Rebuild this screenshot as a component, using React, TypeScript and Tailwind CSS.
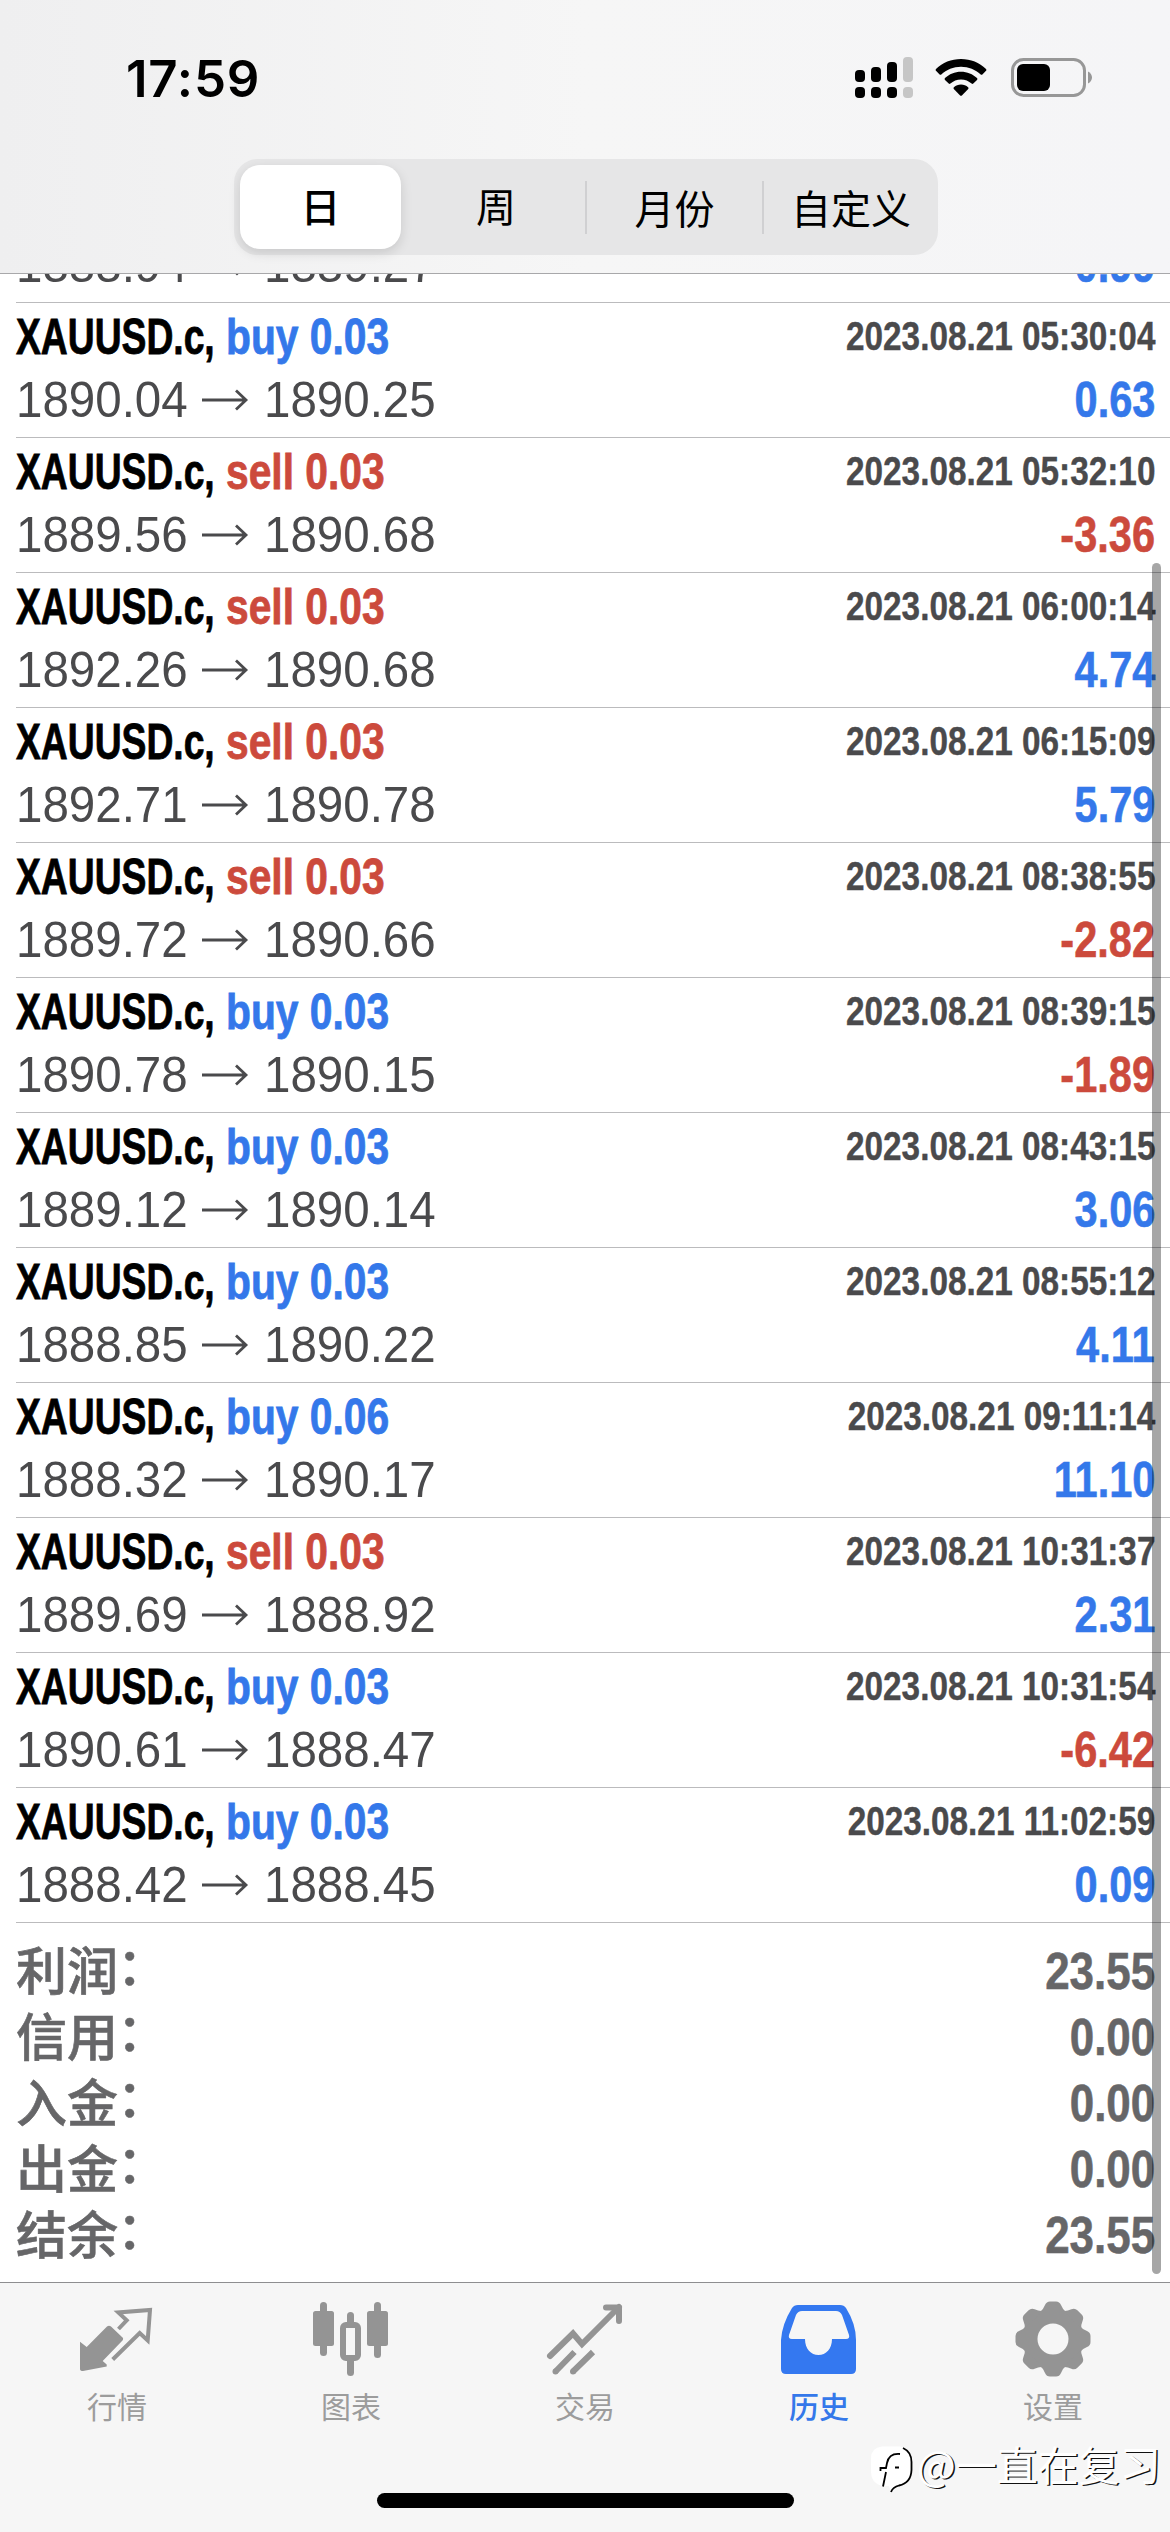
import React from "react";

const BLUE = "text-[#3478ea]";
const RED = "text-[#cc4a3c]";

type Deal = [side: "buy" | "sell", lot: string, from: string, to: string, time: string, profit: string];

const deals: Deal[] = [
  ["buy", "0.03", "1888.94", "1889.27", "05:28:10", "0.99"],
  ["buy", "0.03", "1890.04", "1890.25", "05:30:04", "0.63"],
  ["sell", "0.03", "1889.56", "1890.68", "05:32:10", "-3.36"],
  ["sell", "0.03", "1892.26", "1890.68", "06:00:14", "4.74"],
  ["sell", "0.03", "1892.71", "1890.78", "06:15:09", "5.79"],
  ["sell", "0.03", "1889.72", "1890.66", "08:38:55", "-2.82"],
  ["buy", "0.03", "1890.78", "1890.15", "08:39:15", "-1.89"],
  ["buy", "0.03", "1889.12", "1890.14", "08:43:15", "3.06"],
  ["buy", "0.03", "1888.85", "1890.22", "08:55:12", "4.11"],
  ["buy", "0.06", "1888.32", "1890.17", "09:11:14", "11.10"],
  ["sell", "0.03", "1889.69", "1888.92", "10:31:37", "2.31"],
  ["buy", "0.03", "1890.61", "1888.47", "10:31:54", "-6.42"],
  ["buy", "0.03", "1888.42", "1888.45", "11:02:59", "0.09"],
];

const totals = [
  ["利润", "23.55"],
  ["信用", "0.00"],
  ["入金", "0.00"],
  ["出金", "0.00"],
  ["结余", "23.55"],
];

function StatusBar() {
  return (
    <div className="flex h-[159px] items-start justify-between pl-[126px] pr-[78px] pt-[56px]">
      <div className="text-[51px] font-semibold leading-[45px] tracking-[0.8px] text-black font-['Inter',sans-serif]">17:59</div>
      <div className="flex items-start">
        <svg width="60" height="42" viewBox="0 0 60 42" className="mr-[21px]">
          <g fill="#000">
            <rect x="1" y="14" width="10" height="12" rx="4" />
            <rect x="17" y="11" width="10" height="15" rx="4" />
            <rect x="33" y="6" width="10" height="20" rx="4" />
            <rect x="1" y="31" width="10" height="11" rx="4" />
            <rect x="17" y="31" width="10" height="11" rx="4" />
            <rect x="33" y="31" width="10" height="11" rx="4" />
          </g>
          <g fill="#c6c6c6">
            <rect x="49" y="1" width="10" height="25" rx="4" />
            <rect x="49" y="31" width="10" height="11" rx="4" />
          </g>
        </svg>
        <svg width="52" height="42" viewBox="0 0 52 42" className="mr-[21px]">
          <path d="M26 3c9.700 0 18.500 3.700 25 9.900.5.500.5 1.300 0 1.800l-3.600 3.700c-.5.500-1.200.5-1.700 0C40.500 13.600 33.600 10.700 26 10.700S11.500 13.600 6.300 18.400c-.5.500-1.200.5-1.700 0L1 14.700c-.5-.5-.5-1.300 0-1.800C7.500 6.700 16.300 3 26 3z" />
          <path d="M26 15.800c6.200 0 11.800 2.400 16 6.300.5.500.5 1.300 0 1.800l-3.700 3.700c-.5.500-1.200.5-1.700 0-2.800-2.500-6.500-4.100-10.600-4.100s-7.800 1.600-10.600 4.100c-.5.500-1.200.5-1.700 0L10 23.900c-.5-.5-.5-1.300 0-1.800 4.200-3.900 9.800-6.300 16-6.300z" />
          <path d="M26 28.500c2.700 0 5.200 1 7.100 2.700.5.500.5 1.200.1 1.700l-6.300 6.500c-.5.500-1.300.5-1.800 0l-6.300-6.500c-.4-.5-.4-1.200.1-1.700 1.900-1.700 4.400-2.700 7.100-2.700z" />
        </svg>
        <svg width="84" height="42" viewBox="0 0 84 42">
          <rect x="4.500" y="3.500" width="72" height="36" rx="11" fill="none" stroke="#979797" strokeWidth="3" />
          <rect x="9" y="8" width="33" height="27" rx="6" fill="#000" />
          <path d="M80 15.500c2.400 1.200 4 3.400 4 6s-1.600 4.800-4 6z" fill="#979797" />
        </svg>
      </div>
    </div>
  );
}

function Segments() {
  return (
    <div className="ml-[234px] flex h-[96px] w-[704px] rounded-[24px] bg-[#e6e6e7] p-[6px] text-[40px] leading-[80px] text-black font-['Noto_Sans_CJK_SC',sans-serif]">
      <div className="w-[161px] rounded-[20px] bg-white text-center font-medium shadow-[0_4px_12px_rgba(0,0,0,0.13)]">日</div>
      <div className="w-[184px] pl-[6px] text-center">周</div>
      <div className="flex w-[177px] items-center">
        <span className="h-[53px] w-[2px] bg-[#d0d0d2]" />
        <span className="grow text-center">月份</span>
      </div>
      <div className="flex grow items-center">
        <span className="h-[53px] w-[2px] bg-[#d0d0d2]" />
        <span className="grow pl-[6px] text-center">自定义</span>
      </div>
    </div>
  );
}

function Price({ children }: { children: React.ReactNode }) {
  return (
    <span className="w-[174px] whitespace-nowrap">
      <span className="inline-block origin-left scale-x-[0.95]">{children}</span>
    </span>
  );
}

function DealRow({ deal }: { deal: Deal }) {
  const [side, lot, from, to, time, profit] = deal;
  return (
    <div className="ml-[16px] h-[135px] shrink-0 border-b border-[#bbbbbd] pr-[15px] pt-[4px]">
      <div className="flex h-[60px] items-center justify-between whitespace-nowrap font-bold leading-[60px]">
        <div className="flex text-[50px] [-webkit-text-stroke:0.8px_currentColor]">
          <span className="w-[210px] text-black">
            <span className="inline-block origin-left scale-x-[0.745]">XAUUSD.c,</span>
          </span>
          <span className={side === "buy" ? BLUE : RED}>
            <span className="inline-block origin-left scale-x-[0.815]">
              {side} {lot}
            </span>
          </span>
        </div>
        <span className="-mt-[2px] inline-block origin-right scale-x-[0.833] text-[40px] text-[#4a4a4c] [-webkit-text-stroke:0.4px_currentColor]">2023.08.21 {time}</span>
      </div>
      <div className="mt-[2px] flex h-[62px] items-center justify-between whitespace-nowrap text-[50px] leading-[62px]">
        <div className="flex items-center text-[#4a4a4c]">
          <Price>{from}</Price>
          <svg width="74" height="30" viewBox="0 0 74 30" fill="none" stroke="#4a4a4c" strokeWidth="2.800">
            <path d="M12 15H56M46 5.500L56 15L46 24.500" />
          </svg>
          <Price>{to}</Price>
        </div>
        <span className={"inline-block origin-right scale-x-[0.83] font-bold [-webkit-text-stroke:0.6px_currentColor] " + (profit.startsWith("-") ? RED : BLUE)}>{profit}</span>
      </div>
    </div>
  );
}

function QuotesIcon() {
  return (
    <svg width="78" height="78" viewBox="0 0 78 78">
      <path d="M2 40.700L8.700 46L29 25.500Q31 24 33 25.500L44 36Q46 37.500 44.500 39.500L24.700 60L28.700 63.500V65.500L5 70Q2 70 2 68Z" fill="#949494" />
      <path d="M40.500 28L48.700 19.300L40.300 11.500L72 9L69.700 39.500L61.700 32L34.700 58.500" fill="none" stroke="#949494" strokeWidth="4" />
    </svg>
  );
}

function ChartIcon() {
  return (
    <svg width="78" height="78" viewBox="0 0 78 78" fill="#949494">
      <rect x="1" y="10" width="21" height="35" rx="2.500" />
      <rect x="8" y="1" width="7" height="54" rx="3.500" />
      <rect x="55" y="10" width="21" height="35" rx="2.500" />
      <rect x="62" y="1" width="7" height="56" rx="3.500" />
      <rect x="35" y="11" width="7" height="14" rx="3.500" />
      <rect x="35" y="55" width="7" height="20" rx="3.500" />
      <rect x="31" y="24" width="15" height="33" rx="3" fill="none" stroke="#949494" strokeWidth="6" />
    </svg>
  );
}

function TradeIcon() {
  return (
    <svg width="78" height="78" viewBox="0 0 78 78" fill="none" stroke="#949494" strokeWidth="6">
      <path d="M4 55L27 32.500L36 43L73 6" strokeLinecap="round" />
      <path d="M60 6.500H73V20" strokeLinecap="round" strokeLinejoin="round" />
      <path d="M9.500 70.500L28.500 51M27 70.500L47 51" />
      <g fill="#949494" stroke="none">
        <circle cx="9.500" cy="70.500" r="3" />
        <circle cx="27" cy="70.500" r="3" />
      </g>
    </svg>
  );
}

function HistoryIcon() {
  return (
    <svg width="78" height="78" viewBox="0 0 78 78">
      <path
        fillRule="evenodd"
        d="M18 4H60Q64 4 66 7Q76 23 76 39V68Q76 73 71 73H6Q1 73 1 68V39Q2 23 12 7Q14 4 18 4ZM22 10Q18 10 16 14L9 34Q8 38 12 38H25C25 48 31 54 38.500 54S52 48 52 38H66Q70 38 69 34L62 14Q60 10 56 10Z"
        fill="#3478f0"
      />
    </svg>
  );
}

function GearIcon() {
  return (
    <svg width="78" height="78" viewBox="0 0 78 78">
      <g fill="#949494" transform="translate(39 38)">
        <circle r="30" />
        {[0, 45, 90, 135, 180, 225, 270, 315].map((a) => (
          <path key={a} transform={`rotate(${a})`} d="M-13 -27Q-10 -29 -8 -34Q-6.500 -37.500 -3 -37.500H3Q6.500 -37.500 8 -34Q10 -29 13 -27Z" />
        ))}
        <circle r="15.500" fill="#f6f6f6" />
      </g>
    </svg>
  );
}

const tabs = [
  { label: "行情", icon: <QuotesIcon /> },
  { label: "图表", icon: <ChartIcon /> },
  { label: "交易", icon: <TradeIcon /> },
  { label: "历史", icon: <HistoryIcon />, active: true },
  { label: "设置", icon: <GearIcon /> },
];

export default function App() {
  return (
    <div className="relative flex h-[2532px] w-[1170px] flex-col overflow-hidden bg-white font-['Liberation_Sans',Arial,sans-serif]">
      <header className="h-[274px] shrink-0 border-b border-[#a8a8aa] bg-gradient-to-r from-[#efeff0] via-[#f6f6f6] to-[#f5f5f7]">
        <StatusBar />
        <Segments />
      </header>

      <main className="flex h-[2008px] shrink-0 flex-col overflow-hidden">
        <div className="-mt-[106px]" />
        {deals.map((d) => (
          <DealRow key={d[4]} deal={d} />
        ))}
        <div className="pl-[16px] pr-[15px] pt-[15px] text-[#666668]">
          {totals.map(([label, value]) => (
            <div key={label} className="flex h-[66px] items-center justify-between leading-[66px]">
              <span className="-mt-[7px] text-[51px] font-medium [-webkit-text-stroke:0.6px_currentColor] font-['Noto_Sans_CJK_SC',sans-serif]">
                {label}
                <span className="inline-block -translate-x-[1px] -translate-y-[5px]">：</span>
              </span>
              <span className="inline-block origin-right scale-x-[0.845] text-[52px] font-bold [-webkit-text-stroke:0.6px_currentColor]">{value}</span>
            </div>
          ))}
        </div>
      </main>

      <footer className="flex grow flex-col items-center border-t border-[#8e8e90] bg-[#f6f6f6]">
        <nav className="flex h-[210px] w-full">
          {tabs.map((t) => (
            <div key={t.label} className="flex w-[234px] flex-col items-center pt-[18px]">
              {t.icon}
              <span className={"mt-[6px] text-[30px] leading-[40px] font-['Noto_Sans_CJK_SC',sans-serif] " + (t.active ? "text-[#3478ea] font-medium" : "text-[#9c9c9c]")}>{t.label}</span>
            </div>
          ))}
        </nav>
        <div className="h-[15px] w-[417px] rounded-full bg-black" />
      </footer>

      <div className="absolute left-[1152px] top-[563px] h-[1711px] w-[9px] rounded-full bg-black/35" />

      <div className="absolute left-[870px] top-[2440px] flex items-start">
        <svg width="44" height="54" viewBox="0 0 44 54" className="mr-[3px]">
          <path d="M12 6.500H30Q41 9 41 20V31Q40 43 30 44Q23 46 21 52L19 46H12Q1 43 1 32V18Q1 8 12 6.500Z" fill="#fff" />
          <path d="M33 8Q41.500 12 41.500 22V30Q41 43 29 45.500Q23 47 21 52" fill="none" stroke="#000" strokeWidth="1.800" />
          <path d="M30 14Q19 13 17 23L16 28H10.500V31M16 32L13 46.500M25 27.500H29" fill="none" stroke="#000" strokeWidth="1.800" />
        </svg>
        <span className="-mt-[2px] text-[41px] leading-[50px] text-white [text-shadow:1.500px_1px_0_#111] font-['Noto_Sans_CJK_SC',sans-serif]">@一直在复习</span>
      </div>
    </div>
  );
}
